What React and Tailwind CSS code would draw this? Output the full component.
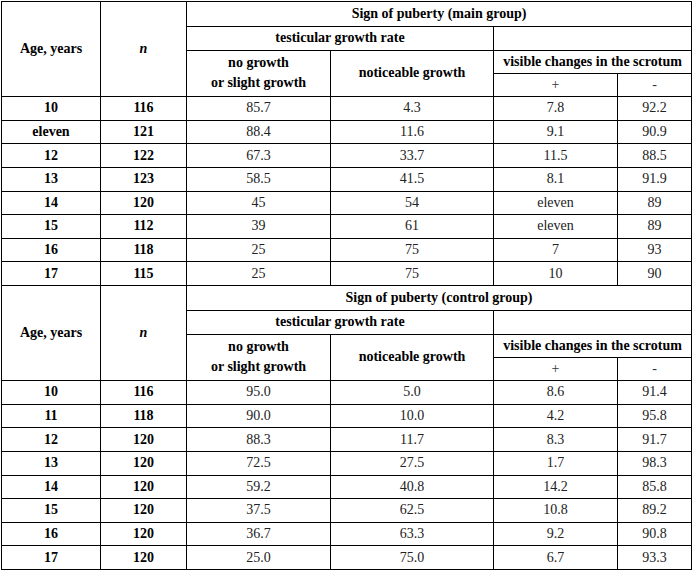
// Puberty signs table: main group and control group, stacked in one bordered table.
const MAIN = [
  ["10", "116", "85.7", "4.3", "7.8", "92.2"],
  ["eleven", "121", "88.4", "11.6", "9.1", "90.9"],
  ["12", "122", "67.3", "33.7", "11.5", "88.5"],
  ["13", "123", "58.5", "41.5", "8.1", "91.9"],
  ["14", "120", "45", "54", "eleven", "89"],
  ["15", "112", "39", "61", "eleven", "89"],
  ["16", "118", "25", "75", "7", "93"],
  ["17", "115", "25", "75", "10", "90"],
];

const CONTROL = [
  ["10", "116", "95.0", "5.0", "8.6", "91.4"],
  ["11", "118", "90.0", "10.0", "4.2", "95.8"],
  ["12", "120", "88.3", "11.7", "8.3", "91.7"],
  ["13", "120", "72.5", "27.5", "1.7", "98.3"],
  ["14", "120", "59.2", "40.8", "14.2", "85.8"],
  ["15", "120", "37.5", "62.5", "10.8", "89.2"],
  ["16", "120", "36.7", "63.3", "9.2", "90.8"],
  ["17", "120", "25.0", "75.0", "6.7", "93.3"],
];

const cell = "border border-black text-center align-middle p-0";
const head = `${cell} font-bold text-black`;

function Section({ title, rows }) {
  return (
    <>
      <tr className="h-[25px]">
        <td rowSpan={4} className={head}>Age, years</td>
        <td rowSpan={4} className={`${head} italic`}>n</td>
        <td colSpan={4} className={head}>{title}</td>
      </tr>
      <tr className="h-[23.5px]">
        <td colSpan={2} className={head}>testicular growth rate</td>
        <td colSpan={2} className={head}></td>
      </tr>
      <tr className="h-[23.5px]">
        <td rowSpan={2} className={`${head} leading-[20px]`}>
          no growth
          <br />
          or slight growth
        </td>
        <td rowSpan={2} className={head}>noticeable growth</td>
        <td colSpan={2} className={head}>visible changes in the scrotum</td>
      </tr>
      <tr className="h-[23px]">
        <td className={`${cell} text-[#333]`}>+</td>
        <td className={`${cell} text-[#333]`}>-</td>
      </tr>
      {rows.map((r, i) => (
        <tr key={i} className="h-[23.625px]">
          <td className={head}>{r[0]}</td>
          <td className={head}>{r[1]}</td>
          {r.slice(2).map((v, j) => (
            <td key={j} className={`${cell} text-[#222]`}>{v}</td>
          ))}
        </tr>
      ))}
    </>
  );
}

export default function App() {
  return (
    <div className="w-[692px] h-[572px] bg-white pt-px pl-px font-['Liberation_Serif','Times_New_Roman',serif]">
      <table className="border-collapse table-fixed w-[690px] text-[14px] leading-none font-['Liberation_Serif','Times_New_Roman',serif]">
        <colgroup>
          <col className="w-[99px]" />
          <col className="w-[86px]" />
          <col className="w-[144px]" />
          <col className="w-[163px]" />
          <col className="w-[124px]" />
          <col className="w-[74px]" />
        </colgroup>
        <tbody>
          <Section title="Sign of puberty (main group)" rows={MAIN} />
          <Section title="Sign of puberty (control group)" rows={CONTROL} />
        </tbody>
      </table>
    </div>
  );
}
